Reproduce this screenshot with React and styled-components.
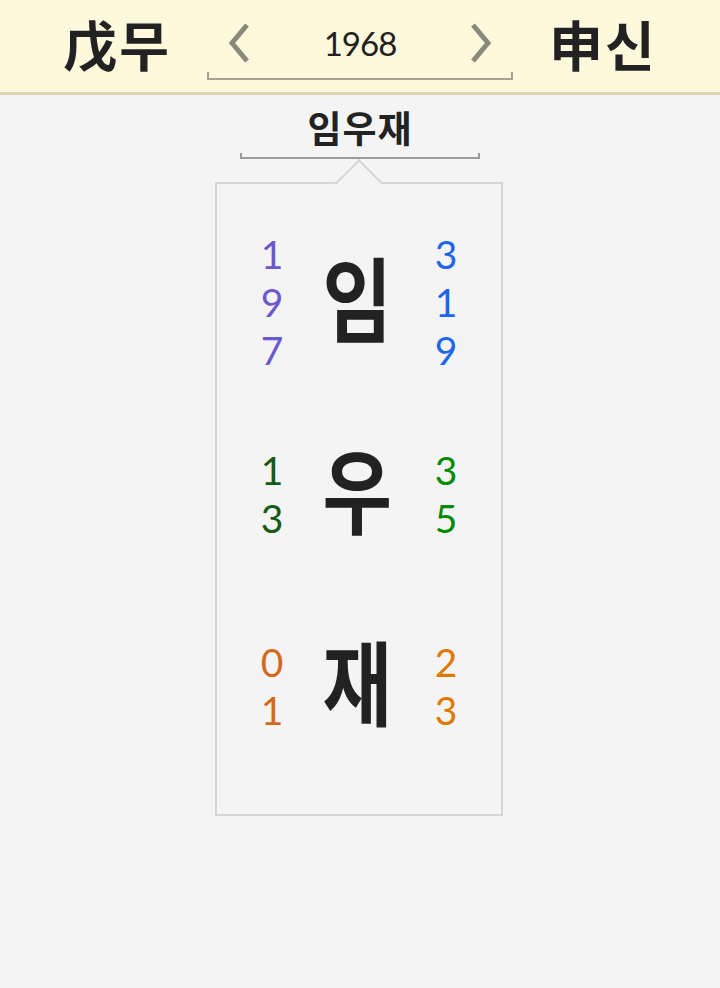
import React from "react";
import styled, { createGlobalStyle } from "styled-components";

const Global = createGlobalStyle`
  html, body { margin: 0; padding: 0; background: #f4f4f4; }
  body { font-family: "Noto Sans CJK KR", "Noto Sans", sans-serif; color: #222; }
`;

const Header = styled.header`
  height: 92px;
  background: #fef8dc;
  border-bottom: 3px solid #dcd5b8;
  display: flex;
  align-items: center;
  justify-content: center;
  gap: 36px;
`;

const Ganji = styled.div`
  font-size: 54px;
  font-weight: 700;
  color: #222;
  line-height: 1;
  letter-spacing: 2px;
  margin-top: -4px;
`;

const Nav = styled.nav`
  position: relative;
  width: 306px;
  height: 60px;
  display: flex;
  align-items: center;
  justify-content: space-between;
  padding: 0 20px;
  box-sizing: border-box;
  margin-top: 8px;
  &::after {
    content: "";
    position: absolute;
    left: 0;
    right: 0;
    bottom: 0;
    height: 6px;
    border: 2px solid #a6a38e;
    border-top: none;
  }
`;

const Arrow = styled.button`
  border: none;
  background: none;
  padding: 0;
  width: 26px;
  height: 42px;
  display: flex;
  align-items: center;
  justify-content: center;
  margin-top: -14px;
`;

const Year = styled.div`
  font-family: "Lato", "Noto Sans", sans-serif;
  font-size: 33px;
  color: #222;
  line-height: 1;
  margin-top: -14px;
  letter-spacing: -1px;
`;

const Main = styled.main`
  display: flex;
  flex-direction: column;
  align-items: center;
  padding-top: 7px;
`;

const Title = styled.h1`
  margin: 0;
  font-size: 37px;
  font-weight: 700;
  line-height: 50px;
  color: #222;
  letter-spacing: 1px;
`;

const Bracket = styled.div`
  width: 240px;
  height: 6px;
  border: 2px solid #9c9c9c;
  border-top: none;
  box-sizing: border-box;
  margin-top: 1px;
`;

const Card = styled.section`
  position: relative;
  width: 288px;
  box-sizing: border-box;
  border: 2px solid #d6d6d6;
  margin-top: 23px;
  padding: 22px 0 32px;
  margin-right: 2px;
  &::before {
    content: "";
    position: absolute;
    left: 50%;
    top: -18px;
    width: 34px;
    height: 34px;
    transform: translateX(-50%) rotate(45deg);
    background: #f4f4f4;
    border-top: 2px solid #d6d6d6;
    border-left: 2px solid #d6d6d6;
    box-sizing: border-box;
  }
`;

const Row = styled.div`
  height: 192px;
  display: grid;
  grid-template-columns: 110px minmax(0, 1fr) 110px;
  align-items: center;
  justify-items: center;
`;

const Digits = styled.div`
  display: flex;
  flex-direction: column;
  align-items: center;
  font-family: "Lato", "Noto Sans", sans-serif;
  font-size: 39px;
  line-height: 48px;
  color: ${(p) => p.$color};
`;

const Glyph = styled.div`
  font-size: 92px;
  font-weight: 700;
  line-height: 1;
  color: #222;
  white-space: nowrap;
  transform: scaleX(0.82);
  margin-top: -14px;
  margin-left: -4px;
`;

const Chevron = ({ dir }) => (
  <svg width="26" height="42" viewBox="0 0 26 42">
    <polyline
      points={dir === "left" ? "20,3 5,21 20,39" : "6,3 21,21 6,39"}
      fill="none"
      stroke="#8a8a7c"
      strokeWidth="5"
    />
  </svg>
);

const rows = [
  { ch: "임", left: ["1", "9", "7"], right: ["3", "1", "9"], lc: "#6a5acd", rc: "#1d66e6" },
  { ch: "우", left: ["1", "3"], right: ["3", "5"], lc: "#155a17", rc: "#048a04" },
  { ch: "재", left: ["0", "1"], right: ["2", "3"], lc: "#d4691e", rc: "#dc7a02" },
];

export default function App() {
  return (
    <>
      <Global />
      <Header>
        <Ganji>戊무</Ganji>
        <Nav>
          <Arrow aria-label="이전">
            <Chevron dir="left" />
          </Arrow>
          <Year>1968</Year>
          <Arrow aria-label="다음">
            <Chevron dir="right" />
          </Arrow>
        </Nav>
        <Ganji>申신</Ganji>
      </Header>
      <Main>
        <Title>임우재</Title>
        <Bracket />
        <Card>
          {rows.map((r) => (
            <Row key={r.ch}>
              <Digits $color={r.lc}>
                {r.left.map((d, i) => (
                  <span key={i}>{d}</span>
                ))}
              </Digits>
              <Glyph>{r.ch}</Glyph>
              <Digits $color={r.rc}>
                {r.right.map((d, i) => (
                  <span key={i}>{d}</span>
                ))}
              </Digits>
            </Row>
          ))}
        </Card>
      </Main>
    </>
  );
}
